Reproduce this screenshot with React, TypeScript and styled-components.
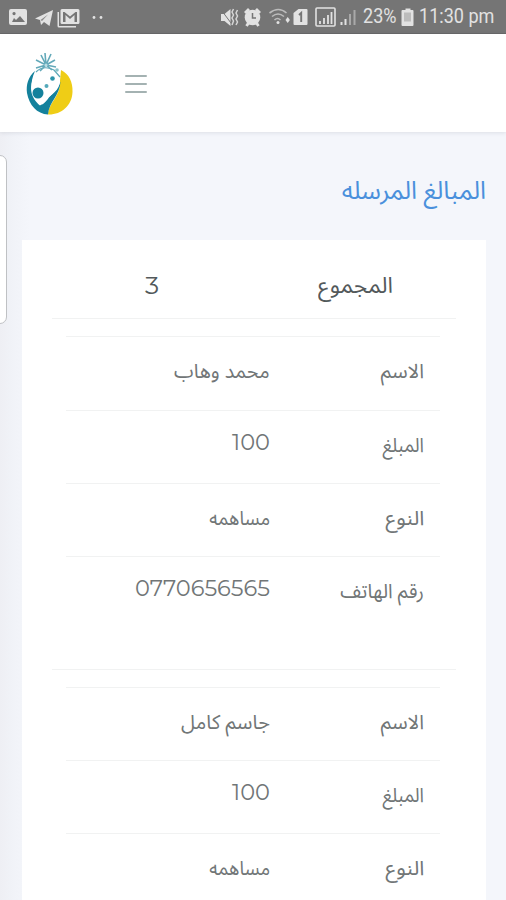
import React from 'react';
import styled, { createGlobalStyle } from 'styled-components';

const GlobalStyle = createGlobalStyle`
  * { box-sizing: border-box; }
  body { margin: 0; background: #f4f6fb; font-family: "Noto Sans Arabic", "DejaVu Sans", sans-serif; }
`;

const Screen = styled.div`
  width: 506px;
  height: 900px;
  overflow: hidden;
  display: flex;
  flex-direction: column;
  background: linear-gradient(90deg, #eeeff4 0, #f1f3f8 14px, #f4f6fb 30px);
`;

const StatusBar = styled.header`
  flex: none;
  height: 34px;
  padding: 0 6px 0 9px;
  display: flex;
  align-items: center;
  justify-content: space-between;
  background: #757575;
  border-bottom: 1px solid #686868;
  color: #e2e2e2;
`;

const StatusIcons = styled.svg`
  display: block;
  flex: none;
`;

const StatusGroup = styled.div`
  display: flex;
  align-items: center;
`;

const StatusText = styled.span<{ $width: number }>`
  width: ${(p) => p.$width}px;
  font: 400 20.500px/37px Roboto, sans-serif;
  white-space: nowrap;
  span {
    display: inline-block;
    transform: scaleX(0.88);
    transform-origin: left;
  }
`;

const NavBar = styled.nav`
  flex: none;
  height: 98px;
  padding: 16px 0 0 23px;
  display: flex;
  gap: 51px;
  background: #fff;
  box-shadow: 0 1px 4px rgba(60, 65, 85, 0.12);
  z-index: 1;
`;

const MenuButton = styled.button`
  width: 22px;
  height: 18px;
  margin-top: 25px;
  padding: 0;
  border: 0;
  background: none;
  display: flex;
  flex-direction: column;
  justify-content: space-between;
`;

const MenuLine = styled.span`
  width: 100%;
  height: 2px;
  border-radius: 1px;
  background: #a4b2b2;
`;

const Content = styled.main`
  position: relative;
  flex: 1;
  padding: 0 20px 0 22px;
  direction: rtl;
`;

const SideHandle = styled.div`
  position: absolute;
  left: -8px;
  top: 23px;
  width: 15px;
  height: 169px;
  border: 1px solid #bfc1c4;
  border-radius: 7px;
  background: #fff;
`;

const Title = styled.h1`
  height: 108px;
  margin: 0;
  padding-top: 43px;
  font-size: 25px;
  font-weight: 400;
  line-height: 32px;
  color: #4a90dc;
`;

const Card = styled.section`
  height: 700px;
  padding: 0 30px;
  background: #fff;
`;

const Total = styled.div`
  height: 79px;
  padding: 30px 63px 0 0;
  display: flex;
  border-bottom: 1px solid #f1f2f2;
  color: #53595b;
  font-size: 22px;
  line-height: 32px;
`;

const Entry = styled.div`
  height: 350.500px;
  padding: 17.400px 16px 0 14px;
  border-bottom: 1px solid #f1f2f2;
`;

const Row = styled.div`
  height: 73.3px;
  padding: 0 16px;
  display: flex;
  border-top: 1px solid #f1f2f2;
  color: #717677;
`;

const Label = styled.span`
  width: 154px;
  padding-top: 20px;
  font-size: 20px;
  line-height: 30px;
`;

const Value = styled(Label)`
  width: 170px;
`;

const Amount = styled.span`
  padding-top: 16px;
  font: 400 22.500px/30px Montserrat, Inter, sans-serif;
`;

const TotalLabel = styled.span`
  width: 234px;
`;

const TotalAmount = styled.span`
  font: 400 25px/30px Montserrat, Inter, sans-serif;
`;

const Fit = styled.span<{ $x: number }>`
  display: inline-block;
  white-space: nowrap;
  transform: scaleX(${(p) => p.$x});
  transform-origin: right;
`;

type Field = { label: string; value: string; numeric?: boolean; lx: number; vx: number };

const entries: Field[][] = [
  [
    { label: 'الاسم', value: 'محمد وهاب', lx: 1, vx: 0.99 },
    { label: 'المبلغ', value: '100', numeric: true, lx: 0.92, vx: 1 },
    { label: 'النوع', value: 'مساهمه', lx: 1.07, vx: 0.92 },
    { label: 'رقم الهاتف', value: '0770656565', numeric: true, lx: 0.975, vx: 1 },
  ],
  [
    { label: 'الاسم', value: 'جاسم كامل', lx: 1, vx: 1 },
    { label: 'المبلغ', value: '100', numeric: true, lx: 0.92, vx: 1 },
    { label: 'النوع', value: 'مساهمه', lx: 1.07, vx: 0.92 },
  ],
];

const NotificationIcons = () => (
  <StatusIcons width="96" height="34" viewBox="9 0 96 34" fill="#e2e2e2">
    <path fillRule="evenodd" d="M11 9h14q2 0 2 2v12q0 2-2 2H11q-2 0-2-2V11q0-2 2-2zm1 13h13l-5-6-4 4-2-2zM14 12a1.6 1.6 0 1 0 .1 0z" />
    <path d="M35 18.500 53 10l-3.500 16-5.500-4-3 3-1-5z" />
    <path d="m40.500 20 7.500-5.500-6 6.500z" fill="#8b8b8b" />
    <path d="M59 12v14h17v1.500H59q-1.500 0-1.500-1.500V12z" />
    <path fillRule="evenodd" d="M62 9h16q1.500 0 1.500 1.500v12q0 1.500-1.500 1.500H62q-1.500 0-1.500-1.500v-12Q60.500 9 62 9zm1 3v10h2.500v-7l4.500 4 4.500-4v7H77V12h-1.500L70 16.500 64.500 12z" />
    <circle cx="94" cy="17.500" r="1.400" /><circle cx="101" cy="17.500" r="1.400" />
  </StatusIcons>
);

const SystemIcons = () => (
  <StatusIcons width="142" height="34" viewBox="221.500 0 142 34" fill="#e2e2e2">
    <path d="M221 14h4l6-5v17l-6-5h-4z" />
    <path d="m221 9 12 16" stroke="#757575" strokeWidth="1" />
    <path d="M234 9l-1.500 3 1.500 3-1.500 3 1.500 3-1.500 4M238 10l-1.500 3 1.500 3-1.500 3 1.500 3-1.500 3" fill="none" stroke="#d5d5d5" strokeWidth="1.500" />
    <circle cx="253" cy="17.500" r="7.800" />
    <path d="m245.500 13 4-4M260.500 13l-4-4M247 26l2-3M259 26l-2-3" stroke="#e2e2e2" strokeWidth="2.800" />
    <path d="M253 13V18h3.500" fill="none" stroke="#757575" strokeWidth="1.500" />
    <path d="M270 13q9-7 17 0M272.500 16.500q6-5 12 0M275 20q3-3 6 0" fill="none" stroke="#bcbcbc" strokeWidth="1.600" />
    <circle cx="278.500" cy="22.500" r="1.500" />
    <path d="m286 20 2.200-3 2.200 3-2.200 3z" />
    <path d="M299 9h8q1 0 1 1v14q0 1-1 1h-12q-1 0-1-1V13z" />
    <path d="m299.500 15 2.200-2v9" fill="none" stroke="#757575" strokeWidth="1.900" />
    <rect x="316.500" y="8" width="19" height="18" rx="1" fill="none" stroke="#e2e2e2" strokeWidth="1.600" />
    <path d="M320.500 24v-3M324.500 24v-6M328.500 24v-9M332 24V12" stroke="#e2e2e2" strokeWidth="1.800" />
    <path d="M342 25v-3M346 25v-6" stroke="#e2e2e2" strokeWidth="2" />
    <path d="M350.500 25V14M355 25V10" stroke="#a9a9a9" strokeWidth="2" />
  </StatusIcons>
);

const Battery = () => (
  <StatusIcons width="20" height="34" viewBox="1.500 0 20 34">
    <path d="M6 10h2V8.500h5V10h2q1 0 1 1v14q0 1-1 1H5q-1 0-1-1V11q0-1 1-1z" fill="#e2e2e2" />
    <path d="M6.500 12.500h7v9h-7z" fill="#bcbcbc" />
  </StatusIcons>
);

const Logo = () => (
  <svg width="51" height="68" viewBox="23 50 51 68">
    <path d="M61 70c8 4 12 12 11.500 22C72 106 61 115 48 114.500c1-13 13-18 12-34z" fill="#efcd16" />
    <path d="M35 71c-7 6-9 14-8 22 2 12 10 21 21 21.500 1-13 12-19 12.500-33-3 9-9 12-13 18-5 6-6 6-9 3-8-10-9-19-3.500-31.500z" fill="#14819c" />
    <path d="M35.500 74c3-4 7-5 12-4.500 7 .5 12.500 4 12.500 11 0 10-9 14-15 20-2 2-3 4-5 5-8-7-13-17-4.500-31.500z" fill="#fff" />
    <path d="M36 72c5-5 12-5 18-2l6 7" fill="none" stroke="#5ca7b7" strokeWidth="1.200" />
    <circle cx="38" cy="93" r="5.500" fill="#14819c" />
    <circle cx="52.500" cy="78.500" r="2.300" fill="#2c94aa" /><circle cx="46.500" cy="86" r="2" fill="#54a9ba" />
    <circle cx="57" cy="70" r="1.800" fill="#8ac3ca" />
    <path d="m46 65-1-12M46 65l-5-10M46 65l-10-5M46 65l-10 3M46 65l5-11M46 65l9-5M46 65l10 2M46 65l-6 6M46 65l6 5" stroke="#63a9b9" strokeWidth="1.600" />
    <circle cx="46" cy="65" r="1.600" fill="#b9dde3" />
  </svg>
);

export default function App() {
  return (
    <Screen>
      <GlobalStyle />
      <StatusBar>
        <NotificationIcons />
        <StatusGroup>
          <SystemIcons />
          <StatusText $width={36}><span>23%</span></StatusText>
          <Battery />
          <StatusText $width={81}><span>11:30 pm</span></StatusText>
        </StatusGroup>
      </StatusBar>
      <NavBar>
        <Logo />
        <MenuButton aria-label="القائمة"><MenuLine /><MenuLine /><MenuLine /></MenuButton>
      </NavBar>
      <Content>
        <SideHandle />
        <Title><Fit $x={1}>المبالغ المرسله</Fit></Title>
        <Card>
          <Total>
            <TotalLabel><Fit $x={1.04}>المجموع</Fit></TotalLabel>
            <TotalAmount>3</TotalAmount>
          </Total>
          {entries.map((fields, i) => (
            <Entry key={i}>
              {fields.map((f) => (
                <Row key={f.label}>
                  <Label><Fit $x={f.lx}>{f.label}</Fit></Label>
                  {f.numeric
                    ? <Amount><Fit $x={f.vx}>{f.value}</Fit></Amount>
                    : <Value><Fit $x={f.vx}>{f.value}</Fit></Value>}
                </Row>
              ))}
            </Entry>
          ))}
        </Card>
      </Content>
    </Screen>
  );
}
